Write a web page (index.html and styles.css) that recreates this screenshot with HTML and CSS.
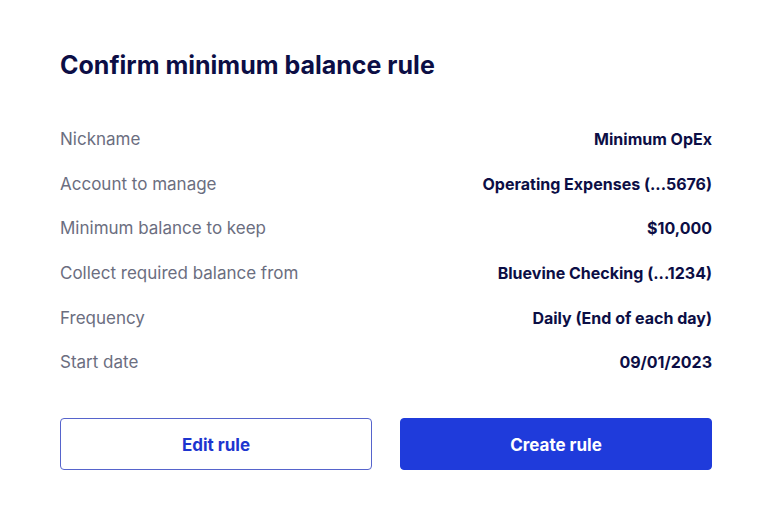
FILE: index.html
```html
<!DOCTYPE html>
<html lang="en">
<head>
    <meta charset="UTF-8">
    <meta name="viewport" content="width=device-width, initial-scale=1.0">
    <title>Confirm rule</title>
    <link rel="stylesheet" href="styles.css">
</head>
<body>
    <div class="container">
        <h1>Confirm minimum balance rule</h1>
        <dl class="summary">
            <div class="row">
                <dt>Nickname</dt>
                <dd>Minimum OpEx</dd>
            </div>
            <div class="row">
                <dt>Account to manage</dt>
                <dd>Operating Expenses (...5676)</dd>
            </div>
            <div class="row">
                <dt>Minimum balance to keep</dt>
                <dd>$10,000</dd>
            </div>
            <div class="row">
                <dt>Collect required balance from</dt>
                <dd>Bluevine Checking (...1234)</dd>
            </div>
            <div class="row">
                <dt>Frequency</dt>
                <dd>Daily (End of each day)</dd>
            </div>
            <div class="row">
                <dt>Start date</dt>
                <dd>09/01/2023</dd>
            </div>
        </dl>
        <div class="actions">
            <button class="btn btn-outline">Edit rule</button>
            <button class="btn btn-primary">Create rule</button>
        </div>
    </div>
</body>
</html>
```
FILE: styles.css
```css
body {
    font-family: Inter, "Noto Sans", sans-serif;
    margin: 0;
    padding: 0;
    background-color: #fff;
}
.container {
    width: 652px;
    padding: 48px 60px 0;
}
h1 {
    margin: 0;
    font-size: 25px;
    font-weight: 700;
    line-height: 34px;
    color: #0c0e45;
}
.summary {
    margin: 35px 0 0;
}
.row {
    display: flex;
    justify-content: space-between;
    align-items: center;
    height: 44.6px;
}
.row dt {
    font-size: 17px;
    color: #6b6e7f;
}
.row dd {
    margin: 0;
    font-size: 16px;
    font-weight: 700;
    color: #0c0e45;
}
.actions {
    display: flex;
    gap: 28px;
    margin-top: 33px;
}
.btn {
    flex: 1;
    height: 52px;
    padding-top: 3px;
    border-radius: 4px;
    font-family: inherit;
    font-size: 17px;
    font-weight: 700;
    cursor: pointer;
}
.btn-outline {
    background-color: #fff;
    border: 1px solid #5664cc;
    color: #1d35cf;
}
.btn-primary {
    background-color: #1f3bdb;
    border: 1px solid #1f3bdb;
    color: #fff;
}
```
